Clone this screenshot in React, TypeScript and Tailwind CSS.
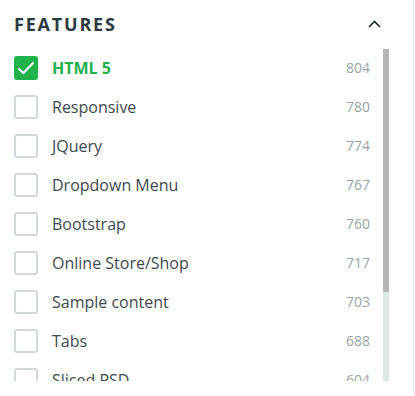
import React from "react";

const items: { label: string; count: number; checked?: boolean }[] = [
  { label: "HTML 5", count: 804, checked: true },
  { label: "Responsive", count: 780 },
  { label: "JQuery", count: 774 },
  { label: "Dropdown Menu", count: 767 },
  { label: "Bootstrap", count: 760 },
  { label: "Online Store/Shop", count: 717 },
  { label: "Sample content", count: 703 },
  { label: "Tabs", count: 688 },
  { label: "Sliced PSD", count: 604 },
];

export default function App() {
  return (
    <div
      className="w-[414px] h-[396px] bg-white border-r border-[#ececec] overflow-hidden"
      style={{ fontFamily: '"Open Sans", "Noto Sans", sans-serif' }}
    >
      <div className="flex items-center justify-between pl-[14px] pr-[32px] h-[48px]">
        <div className="text-[18px] font-bold tracking-[0.1em] text-[#2b3a40] leading-none">
          FEATURES
        </div>
        <svg width="13" height="8" viewBox="0 0 13 8">
          <path d="M1 7 L6.5 1.5 L12 7" fill="none" stroke="#1d2a2f" strokeWidth="1.6" />
        </svg>
      </div>
      <div className="flex h-[333px] pl-[14px]">
        <div className="w-[356px] overflow-hidden">
          {items.map((it) => (
            <div key={it.label} className="flex items-center h-[39px]">
              {it.checked ? (
                <div className="w-[24px] h-[24px] rounded-[3px] bg-[#22b24c] flex items-center justify-center">
                  <svg width="18" height="14" viewBox="0 0 18 14">
                    <path d="M1.5 7.5 L6.5 12 L16.5 1.5" fill="none" stroke="white" strokeWidth="2" />
                  </svg>
                </div>
              ) : (
                <div className="w-[24px] h-[24px] rounded-[3px] border-2 border-[#d3d8da] bg-white" />
              )}
              <div
                className={
                  it.checked
                    ? "ml-[14px] flex-1 text-[16px] font-bold text-[#22b24c]"
                    : "ml-[14px] flex-1 text-[16px] text-[#3d494e]"
                }
              >
                {it.label}
              </div>
              <div className="text-[14px] text-[#99a4a7]">{it.count}</div>
            </div>
          ))}
        </div>
        <div className="ml-[13px] w-[6px] h-[332px] bg-[#e0e5e5] mt-[1px]">
          <div className="w-[6px] h-[243px] bg-[#b5b5b5]" />
        </div>
      </div>
    </div>
  );
}
